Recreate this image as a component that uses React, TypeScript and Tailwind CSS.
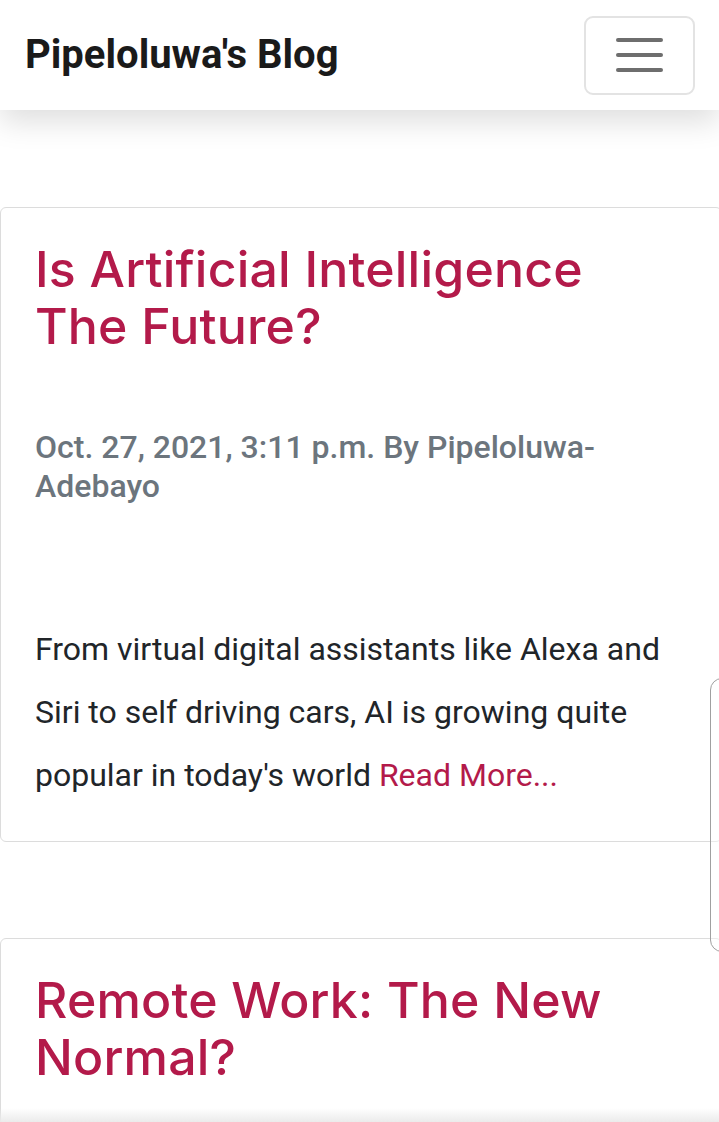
type Post = {
  title: string;
  meta: string;
  excerpt: string;
};

const posts: Post[] = [
  {
    title: "Is Artificial Intelligence The Future?",
    meta: "Oct. 27, 2021, 3:11 p.m. By Pipeloluwa-Adebayo",
    excerpt:
      "From virtual digital assistants like Alexa and Siri to self driving cars, AI is growing quite popular in today's world",
  },
  {
    title: "Remote Work: The New Normal?",
    meta: "Oct. 20, 2021, 9:42 a.m. By Pipeloluwa-Adebayo",
    excerpt:
      "More companies than ever are letting their teams work from anywhere, and it looks like it is here to stay",
  },
];

const PostCard = ({ post }: { post: Post }) => (
  <article className="w-[722px] rounded-[6px] border border-[#dcdcdc] bg-white px-[34px] pb-[34px] pt-[33px]">
    <h2 className="w-[600px] font-['Inter','Noto_Sans',sans-serif] text-[50px] font-medium leading-[57px] tracking-[0.2px] text-[#b31a4a]">
      {post.title}
    </h2>
    <p className="mt-[73px] w-[620px] font-['Roboto',sans-serif] text-[32px] font-medium leading-[39px] text-[#6c757d]">
      {post.meta}
    </p>
    <p className="mt-[112px] w-[650px] font-['Roboto',sans-serif] text-[32px] leading-[63px] text-[#212529]">
      {post.excerpt}{" "}
      <a href="#" className="text-[#b31a4a]">
        Read More...
      </a>
    </p>
  </article>
);

export default function App() {
  return (
    <div className="relative h-[1122px] w-[719px] overflow-hidden bg-white">
      <header className="relative z-10 flex h-[110px] items-center justify-between bg-white pl-[25px] pr-[24px] shadow-[0_12px_28px_rgba(0,0,0,0.13)]">
        <a href="#" className="font-['Roboto',sans-serif] text-[40px] font-bold text-[#1a1a1a]">
          Pipeloluwa's Blog
        </a>
        <button className="flex h-[79px] w-[111px] flex-col items-center justify-center gap-[11px] rounded-[9px] border-2 border-[#e3e3e3]">
          <span className="h-[4px] w-[47px] rounded-full bg-[#6e6e6e]" />
          <span className="h-[4px] w-[47px] rounded-full bg-[#6e6e6e]" />
          <span className="h-[4px] w-[47px] rounded-full bg-[#6e6e6e]" />
        </button>
      </header>

      <main className="flex flex-col gap-[96px] pt-[97px]">
        {posts.map((post) => (
          <PostCard key={post.title} post={post} />
        ))}
      </main>

      {/* scroll handle on the right edge */}
      <div className="absolute left-[710px] top-[678px] h-[274px] w-[24px] rounded-[12px] border border-[#a0a0a0] bg-white/40" />
      <div className="absolute bottom-0 left-0 h-[14px] w-full bg-gradient-to-b from-transparent to-[#ebebeb]" />
    </div>
  );
}
